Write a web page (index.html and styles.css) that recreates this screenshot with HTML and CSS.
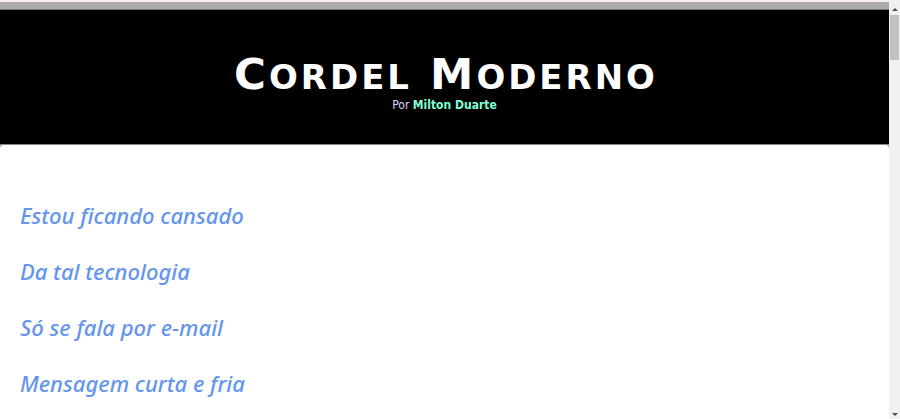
FILE: index.html
```html
<!DOCTYPE html>
<html lang="pt">
<head>
<meta charset="utf-8">
<title>Cordel Moderno</title>
<link rel="stylesheet" href="styles.css">
</head>
<body>
<div class="page">
  <header class="masthead">
    <h1 class="title">C<span class="sc">ordel</span> M<span class="sc">oderno</span></h1>
    <p class="byline">Por <span class="author">Milton Duarte</span></p>
  </header>
  <main class="poem">
    <p class="verse">Estou ficando cansado</p>
    <p class="verse">Da tal tecnologia</p>
    <p class="verse">Só se fala por e-mail</p>
    <p class="verse">Mensagem curta e fria</p>
  </main>
</div>
<div class="scrollbar" aria-hidden="true">
  <span class="arrow arrow-up"></span>
  <span class="thumb"></span>
  <span class="arrow arrow-down"></span>
</div>
</body>
</html>
```
FILE: styles.css
```css
html, body {
  overflow: hidden;
}

body {
  margin: 0;
  background: #fdeeee;
}

.page {
  margin: 2px 11px 0 0;
  background: #aaaaaa;
  border-top: 7px solid #aaaaaa;
}

.masthead {
  background: #000;
  border-top: 1px solid #777;
  border-bottom: 1px solid #888;
  padding: 43px 0 32px;
  text-align: center;
  font-family: "DejaVu Sans", sans-serif;
}

.title {
  margin: 0;
  color: #fff;
  font-size: 43.5px;
  line-height: 43px;
  font-weight: bold;
  letter-spacing: 3px;
  padding-left: 3px;
}

.sc {
  font-size: 0.78em;
  line-height: 1;
  text-transform: uppercase;
}

.byline {
  margin: 2px 0 0;
  color: #d8d8ff;
  font-family: "DejaVu Sans Condensed", "DejaVu Sans", sans-serif;
  font-size: 12px;
  line-height: 14px;
}

.author {
  color: #7fffd4;
  font-weight: bold;
}

.poem {
  background: #fff;
  border-radius: 4px 4px 0 0;
  box-shadow: 0 0 1px #999;
  padding: 55px 20px 0;
  min-height: 600px;
  font-family: "Noto Sans", sans-serif;
}

.verse {
  margin: 0 0 26px;
  color: #6495ed;
  font-size: 22px;
  line-height: 30px;
  font-style: italic;
  font-weight: 500;
}

.scrollbar {
  position: fixed;
  top: 0;
  right: 0;
  bottom: 0;
  width: 11px;
  background: #f1f1f1;
  display: flex;
  flex-direction: column;
  align-items: center;
}

.arrow {
  width: 0;
  height: 0;
  border-left: 3px solid transparent;
  border-right: 3px solid transparent;
}

.arrow-up {
  margin-top: 8px;
  border-bottom: 3px solid #505050;
}

.thumb {
  margin-top: 4px;
  width: 9px;
  height: 45px;
  background: #c1c1c1;
}

.arrow-down {
  margin-top: auto;
  margin-bottom: 3px;
  border-top: 3px solid #505050;
}
```
